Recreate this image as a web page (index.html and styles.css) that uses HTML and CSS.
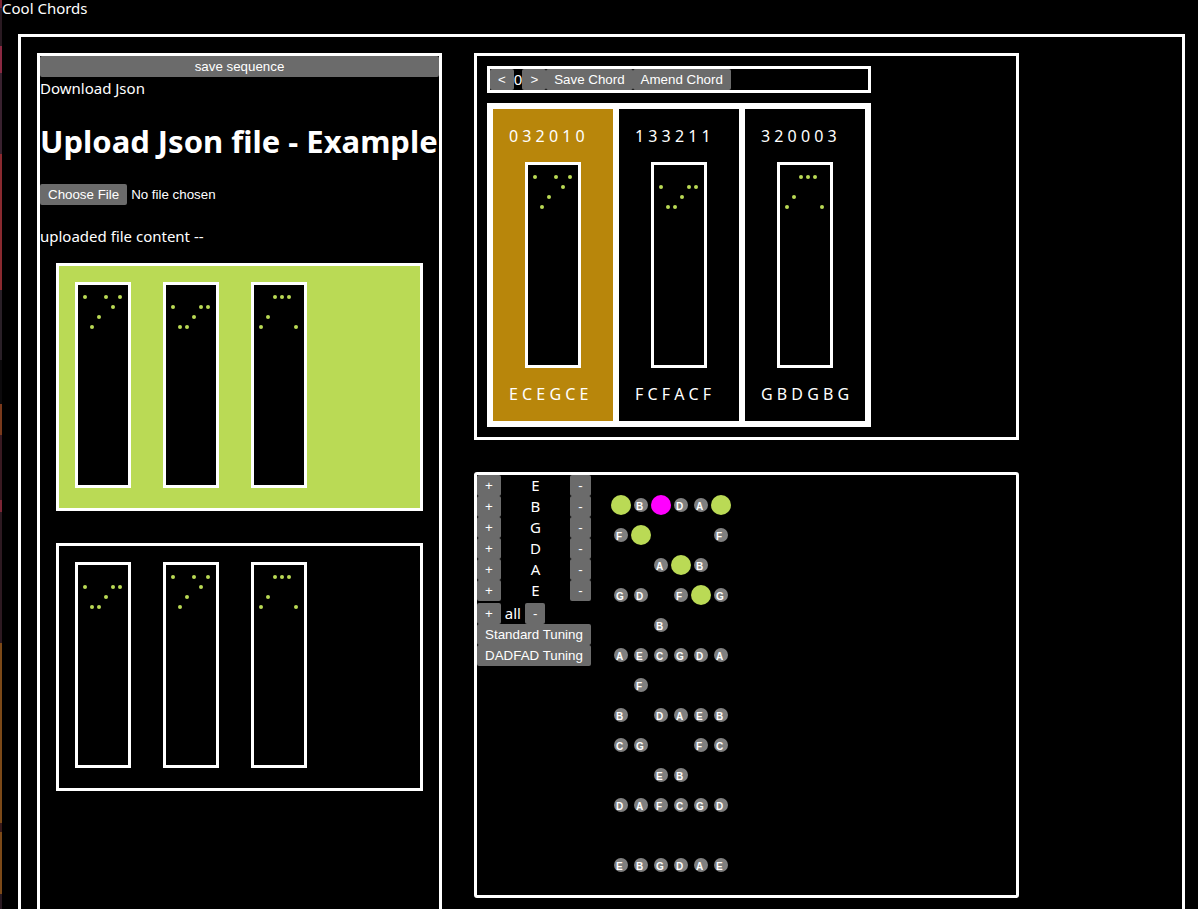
FILE: index.html
```html
<!DOCTYPE html>
<html lang="en">
<head>
<meta charset="utf-8">
<title>Cool Chords</title>
<link rel="stylesheet" href="styles.css">
</head>
<body>
<svg class="defs" aria-hidden="true">
  <symbol id="c-major" viewBox="0 0 50 200"><circle cx="7" cy="12" r="2"/><circle cx="14" cy="42" r="2"/><circle cx="21" cy="32" r="2"/><circle cx="28" cy="12" r="2"/><circle cx="35" cy="22" r="2"/><circle cx="42" cy="12" r="2"/></symbol>
  <symbol id="f-major" viewBox="0 0 50 200"><circle cx="7" cy="22" r="2"/><circle cx="14" cy="42" r="2"/><circle cx="21" cy="42" r="2"/><circle cx="28" cy="32" r="2"/><circle cx="35" cy="22" r="2"/><circle cx="42" cy="22" r="2"/></symbol>
  <symbol id="g-major" viewBox="0 0 50 200"><circle cx="7" cy="42" r="2"/><circle cx="14" cy="32" r="2"/><circle cx="21" cy="12" r="2"/><circle cx="28" cy="12" r="2"/><circle cx="35" cy="12" r="2"/><circle cx="42" cy="42" r="2"/></symbol>
  <circle id="note" r="7"/>
  <circle id="held" r="10"/>
</svg>
<header class="title">Cool Chords</header>
<main class="frame">
  <section class="panel library">
    <button class="btn wide" type="button">save sequence</button>
    <a class="download" href="#">Download Json</a>
    <h1 class="heading">Upload Json file - Example</h1>
    <input class="file" type="file" aria-label="Upload Json file">
    <p class="status">uploaded file content --</p>
    <div class="sequence active">
      <svg class="board"><use href="#c-major"/></svg>
      <svg class="board"><use href="#f-major"/></svg>
      <svg class="board"><use href="#g-major"/></svg>
    </div>
    <div class="sequence">
      <svg class="board"><use href="#f-major"/></svg>
      <svg class="board"><use href="#c-major"/></svg>
      <svg class="board"><use href="#g-major"/></svg>
    </div>
  </section>
  <div class="workspace">
    <section class="panel editor">
      <div class="toolbar">
        <button class="btn" type="button">&lt;</button><span>0</span><button class="btn" type="button">&gt;</button><button class="btn" type="button">Save Chord</button><button class="btn" type="button">Amend Chord</button>
      </div>
      <div class="chords">
        <article class="chord selected"><span>0 3 2 0 1 0</span><svg class="board"><use href="#c-major"/></svg><span>E C E G C E</span></article>
        <article class="chord"><span>1 3 3 2 1 1</span><svg class="board"><use href="#f-major"/></svg><span>F C F A C F</span></article>
        <article class="chord"><span>3 2 0 0 0 3</span><svg class="board"><use href="#g-major"/></svg><span>G B D G B G</span></article>
      </div>
    </section>
    <section class="panel tuner">
      <div class="tuning">
        <div class="string"><button class="btn" type="button">+</button><span>E</span><button class="btn" type="button">-</button></div>
        <div class="string"><button class="btn" type="button">+</button><span>B</span><button class="btn" type="button">-</button></div>
        <div class="string"><button class="btn" type="button">+</button><span>G</span><button class="btn" type="button">-</button></div>
        <div class="string"><button class="btn" type="button">+</button><span>D</span><button class="btn" type="button">-</button></div>
        <div class="string"><button class="btn" type="button">+</button><span>A</span><button class="btn" type="button">-</button></div>
        <div class="string"><button class="btn" type="button">+</button><span>E</span><button class="btn" type="button">-</button></div>
        <div class="all"><button class="btn" type="button">+</button><span>all</span><button class="btn" type="button">-</button></div>
        <button class="btn wide" type="button">Standard Tuning</button>
        <button class="btn wide" type="button">DADFAD Tuning</button>
      </div>
      <svg class="neck" viewBox="0 0 150 420">
        <g transform="translate(30 30)"><use class="on" href="#held"/><use href="#note" x="20"/><use class="root" href="#held" x="40"/><use href="#note" x="60"/><use href="#note" x="80"/><use class="on" href="#held" x="100"/><text x="15 55 75" y="5">BDA</text></g>
        <g transform="translate(30 60)"><use href="#note"/><use class="on" href="#held" x="20"/><use href="#note" x="100"/><text x="-5 95" y="5">FF</text></g>
        <g transform="translate(30 90)"><use href="#note" x="40"/><use class="on" href="#held" x="60"/><use href="#note" x="80"/><text x="35 75" y="5">AB</text></g>
        <g transform="translate(30 120)"><use href="#note"/><use href="#note" x="20"/><use href="#note" x="60"/><use class="on" href="#held" x="80"/><use href="#note" x="100"/><text x="-5 15 55 95" y="5">GDFG</text></g>
        <g transform="translate(30 150)"><use href="#note" x="40"/><text x="35" y="5">B</text></g>
        <g transform="translate(30 180)"><use href="#note"/><use href="#note" x="20"/><use href="#note" x="40"/><use href="#note" x="60"/><use href="#note" x="80"/><use href="#note" x="100"/><text x="-5 15 35 55 75 95" y="5">AECGDA</text></g>
        <g transform="translate(30 210)"><use href="#note" x="20"/><text x="15" y="5">F</text></g>
        <g transform="translate(30 240)"><use href="#note"/><use href="#note" x="40"/><use href="#note" x="60"/><use href="#note" x="80"/><use href="#note" x="100"/><text x="-5 35 55 75 95" y="5">BDAEB</text></g>
        <g transform="translate(30 270)"><use href="#note"/><use href="#note" x="20"/><use href="#note" x="80"/><use href="#note" x="100"/><text x="-5 15 75 95" y="5">CGFC</text></g>
        <g transform="translate(30 300)"><use href="#note" x="40"/><use href="#note" x="60"/><text x="35 55" y="5">EB</text></g>
        <g transform="translate(30 330)"><use href="#note"/><use href="#note" x="20"/><use href="#note" x="40"/><use href="#note" x="60"/><use href="#note" x="80"/><use href="#note" x="100"/><text x="-5 15 35 55 75 95" y="5">DAFCGD</text></g>
        <g transform="translate(30 390)"><use href="#note"/><use href="#note" x="20"/><use href="#note" x="40"/><use href="#note" x="60"/><use href="#note" x="80"/><use href="#note" x="100"/><text x="-5 15 35 55 75 95" y="5">EBGDAE</text></g>
      </svg>
    </section>
  </div>
</main>
</body>
</html>
```
FILE: styles.css
```css
* { box-sizing: border-box; }
body {
  margin: 0;
  padding-left: 2px;
  height: 100vh;
  overflow: hidden;
  color: #fff;
  background: linear-gradient(#7d2636 0 8px, #2a1a22 8px 46px, #8b2942 46px 73px, #3a2230 73px 154px, #8b2a30 154px 290px, #2a2028 290px 360px, #0c0a0c 360px 404px, #7a3a1c 404px 435px, #3a1a22 435px 500px, #7d2636 500px 512px, #2e1a22 512px 643px, #7d4a18 643px 823px, #3a1a1a 823px 832px, #7d4a18 832px 894px, #2a1a22 894px) left / 2px 100% no-repeat #000;
  font: 15px/21px "Noto Sans", sans-serif;
}
.defs { position: absolute; width: 0; height: 0; }
.title { height: 18px; line-height: 16px; }
.frame {
  display: grid;
  grid-template-columns: 405fr 545fr 115fr;
  gap: 32px;
  margin: 16px 13px 0 16px;
  padding: 16px;
  min-height: 100vh;
  border: 3px solid #fff;
}
.panel { border: 3px solid #fff; }
.library { display: flex; flex-direction: column; }
.btn, .file::file-selector-button {
  height: 21px;
  padding: 0 8px;
  border: 0;
  border-radius: 2px;
  color: #fff;
  background: #6b6b6b;
  font-family: "Liberation Sans", Arial, sans-serif;
}
.btn { display: block; }
.wide { width: 100%; }
.download { color: #fff; line-height: 22px; text-decoration: none; }
.heading { margin: 21px 0; font-size: 31px; line-height: 43px; white-space: nowrap; }
.file { height: 21px; color: #fff; font-family: "Liberation Sans", Arial, sans-serif; }
.status { margin: 21px 0 0; }
.sequence {
  display: flex;
  gap: 32px;
  margin: 16px;
  padding: 16px 16px 20px;
  border: 3px solid #fff;
}
.active { background: #bada55; }
.board {
  display: block;
  width: 56px;
  height: 206px;
  border: 3px solid #fff;
  background: #000;
  fill: #bada55;
}
.workspace { display: flex; flex-direction: column; gap: 32px; }
.editor { display: flex; flex-direction: column; align-items: flex-start; gap: 10px; padding: 10px; }
.toolbar { display: flex; width: 384px; border: 3px solid #fff; }
.chords { display: flex; border: 3px solid #fff; }
.chord {
  display: flex;
  flex-direction: column;
  gap: 15px;
  width: 126px;
  padding: 16px;
  border: 3px solid #fff;
  font-size: 16px;
  line-height: 22px;
  white-space: nowrap;
}
.chord .board { margin-left: 16px; }
.selected { background: #b8860b; }
.tuner { display: flex; border-radius: 3px; }
.tuning { width: 114px; }
.string { display: grid; grid-template-columns: 24px 1fr 21px; text-align: center; }
.all { display: flex; gap: 4px; margin-top: 2px; }
.neck { width: 150px; height: 420px; fill: #808080; }
.neck .on { fill: #bada55; }
.neck .root { fill: #f0f; }
.neck text { fill: #fff; font: bold 10px "Liberation Sans", Arial, sans-serif; }
```
